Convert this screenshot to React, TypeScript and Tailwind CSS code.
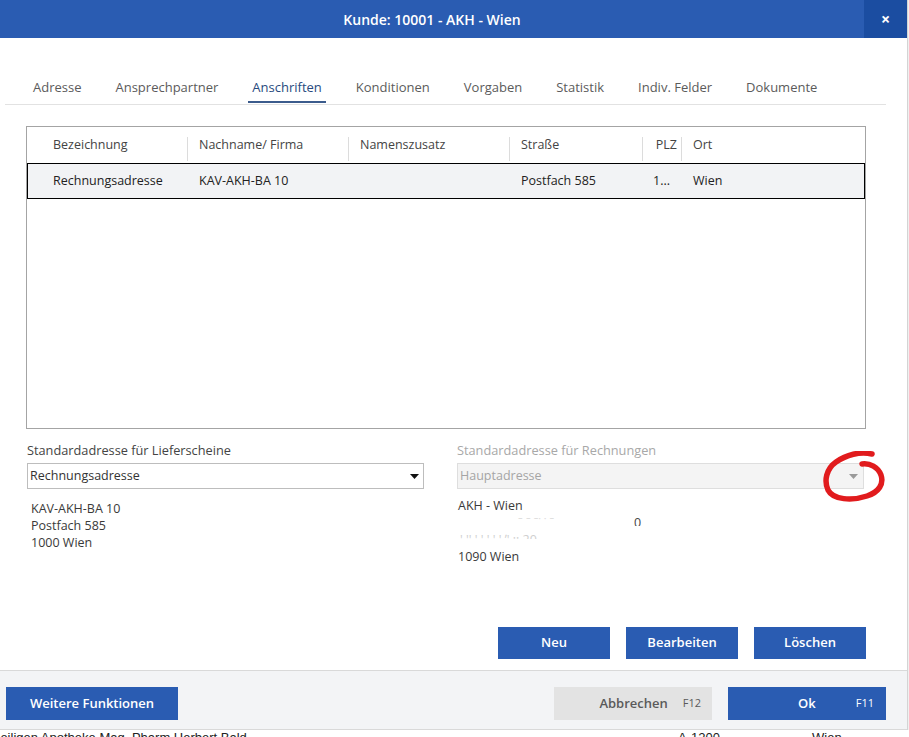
import type { ReactNode } from "react";

const tabs = [
  "Adresse",
  "Ansprechpartner",
  "Anschriften",
  "Konditionen",
  "Vorgaben",
  "Statistik",
  "Indiv. Felder",
  "Dokumente",
];

const gridCols = "grid grid-cols-[160px_161px_161px_133px_39px_1fr]";

function HeaderCell({ children, first }: { children?: ReactNode; first?: boolean }) {
  return (
    <div
      className={
        first
          ? "h-[24px] pl-[26px] leading-[16px] text-[#444]"
          : "h-[24px] border-l border-[#dcdcdc] pl-[11px] leading-[16px] text-[#444]"
      }
    >
      {children}
    </div>
  );
}

function Caret({ disabled }: { disabled?: boolean }) {
  return (
    <svg width="9" height="5" viewBox="0 0 9 5" className="shrink-0">
      <path d="M0 0H9L4.5 5Z" fill={disabled ? "#9a9a9a" : "#111"} />
    </svg>
  );
}

function BlueButton({ children, className }: { children: ReactNode; className: string }) {
  return (
    <button
      className={
        "flex items-center justify-center bg-[#2a5cb2] text-[13px] font-semibold text-white " +
        className
      }
    >
      {children}
    </button>
  );
}

export default function App() {
  return (
    <div className="relative flex h-[737px] w-[909px] flex-col overflow-hidden bg-white font-['Open_Sans',sans-serif] text-[12.5px] text-[#333]">
      <div className="flex h-[730px]">
        {/* dialog */}
        <div className="flex w-[907px] flex-col">
          <div className="flex h-[38px] shrink-0 bg-[#2a5cb2]">
            <div className="flex flex-1 items-center justify-center text-[14px] font-semibold text-white">
              Kunde: 10001 - AKH - Wien
            </div>
            <button className="flex w-[43px] items-center justify-center bg-[#1b4da1] text-[16px] font-bold text-white">
              ×
            </button>
          </div>

          <div className="flex flex-1 flex-col">
            {/* tabs */}
            <nav className="ml-[5px] flex w-[881px] gap-[26px] border-b border-[#e2e2e2] pb-[1px] pl-[24px] pt-[40px]">
              {tabs.map((t) => (
                <div
                  key={t}
                  className={
                    t === "Anschriften"
                      ? "border-b-2 border-[#3b5b8c] px-[4px] pb-[5px] text-[13px] leading-[18px] text-[#284a7e]"
                      : "border-b-2 border-transparent px-[4px] pb-[5px] text-[13px] leading-[18px] text-[#5b5b5b]"
                  }
                >
                  {t}
                </div>
              ))}
            </nav>

            {/* table */}
            <div className="ml-[26px] mt-[21px] h-[303px] w-[840px] border border-[#a4a4a4]">
              <div className={gridCols + " mt-[10px]"}>
                <HeaderCell first>Bezeichnung</HeaderCell>
                <HeaderCell>Nachname/ Firma</HeaderCell>
                <HeaderCell>Namenszusatz</HeaderCell>
                <HeaderCell>Straße</HeaderCell>
                <div className="h-[24px] border-l border-[#dcdcdc] pr-[4px] text-right leading-[16px] text-[#444]">
                  PLZ
                </div>
                <HeaderCell>Ort</HeaderCell>
              </div>
              <div className={gridCols + " mt-[2px] h-[36px] items-center border border-black bg-[#f2f3f5] text-[#222]"}>
                <div className="pl-[25px]">Rechnungsadresse</div>
                <div className="pl-[11px]">KAV-AKH-BA 10</div>
                <div />
                <div className="pl-[11px]">Postfach 585</div>
                <div className="pl-[10px]">1...</div>
                <div className="pl-[11px]">Wien</div>
              </div>
            </div>

            {/* default addresses */}
            <div className="ml-[27px] mt-[13px] flex gap-[33px]">
              <div className="flex w-[397px] flex-col">
                <div className="text-[12.75px] leading-[16px] text-[#444]">Standardadresse für Lieferscheine</div>
                <div className="mt-[5px] flex h-[26px] items-center justify-between border border-[#bdbdbd] pl-[2px] pr-[4px] text-[#333]">
                  <span>Rechnungsadresse</span>
                  <Caret />
                </div>
                <div className="mt-[11px] pl-[4px] leading-[17px] text-[#3a3a3a]">
                  <div>KAV-AKH-BA 10</div>
                  <div>Postfach 585</div>
                  <div>1000 Wien</div>
                </div>
              </div>
              <div className="flex w-[407px] flex-col">
                <div className="text-[12.75px] leading-[16px] text-[#a8a8a8]">Standardadresse für Rechnungen</div>
                <div className="mt-[5px] flex h-[26px] items-center justify-between border border-[#dedede] bg-[#f4f4f4] pl-[2px] pr-[5px] text-[#a5a5a5]">
                  <span>Hauptadresse</span>
                  <Caret disabled />
                </div>
                <div className="mt-[8px] pl-[1px] leading-[17px] text-[#3a3a3a]">
                  <div>AKH - Wien</div>
                  <div className="h-[17px]">
                    <div className="h-[12px] overflow-hidden">
                      <span className="ml-[60px] text-[#dcdcdc]">ˉ ˉ ˉ˙ ˙ ˉ</span>
                      <span className="ml-[80px] text-[#444]">0</span>
                    </div>
                  </div>
                  <div className="h-[17px]">
                    <div className="h-[8px] overflow-hidden text-[#cfcfcf]">
                      <span className="ml-[2px]">' '' '   ' ' ' '  ʼ'  ;; 20</span>
                    </div>
                  </div>
                  <div>1090 Wien</div>
                </div>
              </div>
            </div>

            {/* row actions */}
            <div className="mb-[11px] ml-[498px] mt-auto flex gap-[16px]">
              <BlueButton className="h-[32px] w-[112px]">Neu</BlueButton>
              <BlueButton className="h-[32px] w-[112px]">Bearbeiten</BlueButton>
              <BlueButton className="h-[32px] w-[112px]">Löschen</BlueButton>
            </div>
          </div>

          {/* footer */}
          <div className="flex h-[60px] shrink-0 items-start border-y border-[#d9d9d9] bg-[#f3f4f6] pt-[16px]">
            <BlueButton className="ml-[6px] h-[33px] w-[172px]">Weitere Funktionen</BlueButton>
            <button className="ml-auto flex h-[33px] w-[158px] items-center justify-end gap-[15px] bg-[#e3e3e3] pr-[11px] text-[13px] font-semibold text-[#5a5a5a]">
              <span>Abbrechen</span>
              <span className="text-[11px] font-normal">F12</span>
            </button>
            <button className="ml-[16px] mr-[21px] flex h-[33px] w-[158px] items-center bg-[#2a5cb2] text-white">
              <span className="flex-1 pl-[30px] text-center text-[13px] font-semibold">Ok</span>
              <span className="pr-[12px] text-[11px]">F11</span>
            </button>
          </div>
        </div>
        <div className="w-[2px] border-l border-[#d4d4d4] bg-[#f0f0f0]" />
      </div>

      {/* underlying list row */}
      <div className="flex h-[7px] items-start overflow-visible font-['Liberation_Sans',sans-serif] text-[13px] leading-[15px] text-[#222]">
        <span className="-ml-[9px] w-[687px]">Heiligen Apotheke Mag. Pharm Herbert Bald</span>
        <span className="w-[134px]">A-1200</span>
        <span>Wien</span>
      </div>

      {/* red annotation */}
      <svg
        className="pointer-events-none absolute left-[822px] top-[451px]"
        width="64"
        height="52"
        viewBox="0 0 64 52"
      >
        <path
          d="M50 3 C38 0 24 4 14 11 C4 18 2 30 6 39 C11 49 30 50 45 45 C57 41 62 33 59 24 C56 16 48 12 40 13"
          fill="none"
          stroke="#e11b1d"
          strokeWidth="5.5"
          strokeLinecap="round"
        />
      </svg>
    </div>
  );
}
